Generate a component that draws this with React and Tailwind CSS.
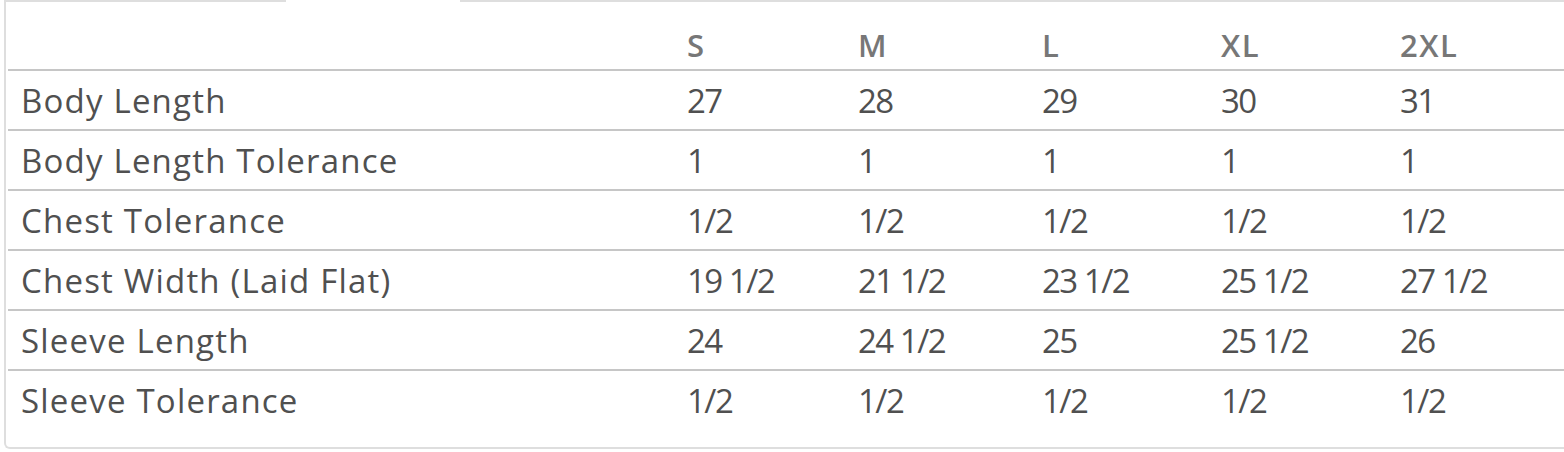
import React from "react";

const sizes = ["S", "M", "L", "XL", "2XL"];

const rows = [
  ["Body Length", "27", "28", "29", "30", "31"],
  ["Body Length Tolerance", "1", "1", "1", "1", "1"],
  ["Chest Tolerance", "1/2", "1/2", "1/2", "1/2", "1/2"],
  ["Chest Width (Laid Flat)", "19 1/2", "21 1/2", "23 1/2", "25 1/2", "27 1/2"],
  ["Sleeve Length", "24", "24 1/2", "25", "25 1/2", "26"],
  ["Sleeve Tolerance", "1/2", "1/2", "1/2", "1/2", "1/2"],
];

const cols = "grid grid-cols-[666px_171px_184px_179px_179px_1fr]";

export default function App() {
  return (
    <div
      className="h-[452px] w-[1564px] overflow-hidden bg-white"
      style={{ fontFamily: '"Open Sans", "DejaVu Sans", sans-serif' }}
    >
      <div className="relative ml-1 w-[1620px] rounded-bl-md border-2 border-r-0 border-[#dedede] pb-[18px] pl-[2px]">
        {/* active tab hides the top border */}
        <div className="absolute -top-[2px] left-[280px] h-[2px] w-[174px] bg-white" />

        <div className={`${cols} h-[67px] pt-[19px]`}>
          <div />
          {sizes.map((s) => (
            <div
              key={s}
              className="flex items-center pl-[13px] text-[31px] font-semibold tracking-[1.5px] text-[#777]"
            >
              {s}
            </div>
          ))}
        </div>

        {rows.map((r) => (
          <div
            key={r[0]}
            className={`${cols} h-[60px] border-t-2 border-[#c6c6c6] text-[33px] text-[#505050]`}
          >
            {r.map((c, i) => (
              <div
                key={i}
                className={`flex items-center pl-[13px] leading-none ${
                  i === 0 ? "tracking-[1.2px]" : "tracking-[-1.5px]"
                }`}
              >
                {c}
              </div>
            ))}
          </div>
        ))}
      </div>
    </div>
  );
}
